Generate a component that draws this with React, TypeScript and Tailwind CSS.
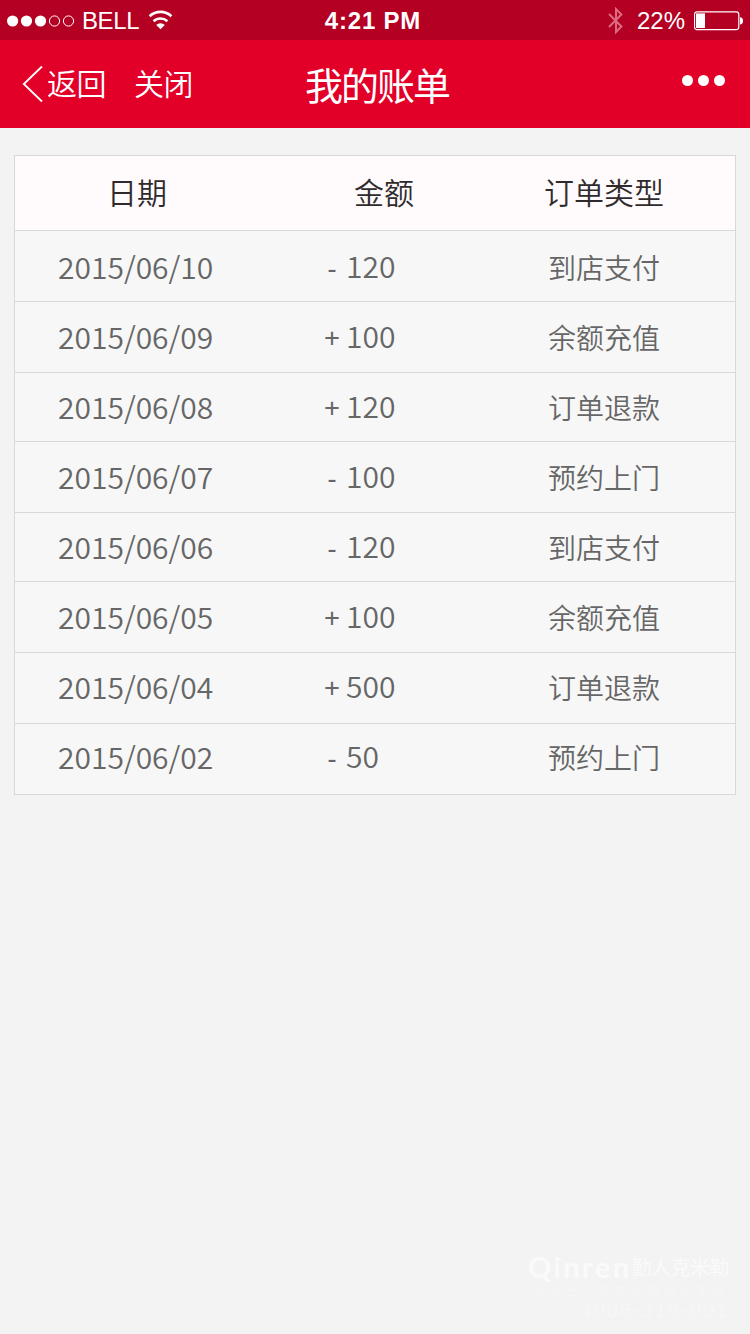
import React from "react";

type Bill = { date: string; sign: "+" | "-"; amount: string; kind: string; row: string };

const bills: Bill[] = [
  { date: "2015/06/10", sign: "-", amount: "120", kind: "到店支付", row: "h-[71px] pt-[14px]" },
  { date: "2015/06/09", sign: "+", amount: "100", kind: "余额充值", row: "h-[71px] pt-[13px]" },
  { date: "2015/06/08", sign: "+", amount: "120", kind: "订单退款", row: "h-[69px] pt-3" },
  { date: "2015/06/07", sign: "-", amount: "100", kind: "预约上门", row: "h-[71px] pt-[13px]" },
  { date: "2015/06/06", sign: "-", amount: "120", kind: "到店支付", row: "h-[69px] pt-3" },
  { date: "2015/06/05", sign: "+", amount: "100", kind: "余额充值", row: "h-[71px] pt-[13px]" },
  { date: "2015/06/04", sign: "+", amount: "500", kind: "订单退款", row: "h-[71px] pt-3" },
  { date: "2015/06/02", sign: "-", amount: "50", kind: "预约上门", row: "h-[71px] pt-[11px]" },
];

function StatusBar() {
  return (
    <div className="flex h-10 items-center bg-[#b40022] font-['Liberation_Sans',sans-serif] text-white">
      <div className="flex w-[250px] items-center pl-[7px]">
        <svg width="68" height="12" viewBox="0 0 68 12" fill="white" className="mt-px">
          <circle cx="5.6" cy="6" r="5.6" />
          <circle cx="19.5" cy="6" r="5.6" />
          <circle cx="33.5" cy="6" r="5.6" />
          <circle cx="47.5" cy="6" r="5.1" fill="none" stroke="white" />
          <circle cx="61.5" cy="6" r="5.1" fill="none" stroke="white" />
        </svg>
        <span className="ml-[7px] mt-0.5 w-[58px] text-2xl leading-6 tracking-[-0.4px]">BELL</span>
        <svg width="26" height="20" viewBox="0 0 26 20" className="ml-2" fill="none" stroke="white" strokeWidth="2.6">
          <path d="M1.6 6.2 A16 16 0 0 1 23.4 6.2" />
          <path d="M5.6 11.2 A10 10 0 0 1 19.4 11.2" />
          <path d="M8.2 15 A6 6 0 0 1 16.8 15 L12.5 19.3 Z" fill="white" stroke="none" />
        </svg>
      </div>
      <div className="mt-0.5 flex w-[250px] justify-center text-2xl font-bold leading-6 tracking-[0.8px]">
        <span className="-ml-1">4:21 PM</span>
      </div>
      <div className="flex w-[250px] items-center justify-end pr-[6px]">
        <svg width="18" height="28" viewBox="0 0 18 28" fill="none" stroke="#dc6b80" strokeWidth="2" className="mt-px">
          <path d="M1 7 L13.4 19.5 L8 25 V2 L13.4 7.5 L1 20" />
        </svg>
        <span className="ml-[11px] mt-0.5 w-[51px] text-2xl leading-6">22%</span>
        <svg width="50" height="20" viewBox="0 0 50 20" className="ml-[6px] mt-px">
          <rect x="0.5" y="0.8" width="44.3" height="17.8" rx="2.5" fill="none" stroke="white" strokeWidth="1.2" />
          <rect x="2" y="2.4" width="9" height="14.6" fill="white" />
          <path d="M46 6.2 a3 3.6 0 0 1 0 7.2Z" fill="white" />
        </svg>
      </div>
    </div>
  );
}

function NavBar() {
  return (
    <div className="flex h-[88px] items-center bg-[#e20029] text-white">
      <div className="flex w-[250px] items-center pl-[22px] font-[350]">
        <svg width="22" height="38" viewBox="0 0 22 38" fill="none" stroke="white" strokeWidth="1.8">
          <path d="M20 1.5 L1.8 19 L20 36.5" />
        </svg>
        <span className="-mt-1 ml-[3px] w-[60px] text-[30px] leading-[44px] tracking-[-0.5px]">返回</span>
        <span className="-mt-1 ml-[27px] text-[30px] leading-[44px] tracking-[-0.5px]">关闭</span>
      </div>
      <h1 className="-mt-px flex w-[254px] justify-center text-[38px] font-normal leading-[50px] tracking-[-2px]">
        我的账单
      </h1>
      <div className="flex flex-1 justify-end pr-6">
        <svg width="44" height="12" viewBox="0 0 44 12" fill="white" className="-mt-[7px]">
          <circle cx="5.5" cy="5.5" r="5.5" />
          <circle cx="21.5" cy="5.5" r="5.5" />
          <circle cx="37.5" cy="5.5" r="5.5" />
        </svg>
      </div>
    </div>
  );
}

function BillTable() {
  return (
    <div className="mx-[14px] mt-[27px] border border-b-0 border-[#d8d8d8] bg-[#f7f7f7] font-[350]">
      <div className="flex h-[75px] border-b border-[#d8d8d8] bg-[#fffafb] pt-[13px] text-[30px] leading-[44px] text-[#2f2b2c]">
        <span className="w-[339px] pl-[92px]">日期</span>
        <span className="w-[190px]">金额</span>
        <span>订单类型</span>
      </div>
      {bills.map((b) => (
        <div key={b.date} className={`flex border-b border-[#d8d8d8] leading-[40px] text-[#666] ${b.row}`}>
          <span className="w-[303px] pl-[43px] pt-px text-[30px]">{b.date}</span>
          <span className="flex w-[230px] text-[30px]">
            <span className="flex w-7 justify-center pt-0.5 font-['Noto_Sans',sans-serif] text-[28px] font-normal">
              {b.sign}
            </span>
            <span>{b.amount}</span>
          </span>
          <span className="pt-0.5 text-[28px]">{b.kind}</span>
        </div>
      ))}
    </div>
  );
}

function Watermark() {
  return (
    <div className="mr-[21px] flex flex-col items-end text-[#fafafa]">
      <div className="flex h-[28px] items-center">
        <span className="font-['Lato',sans-serif] text-[29px] font-bold leading-7 tracking-[2.4px]">Qinren</span>
        <span className="text-[20px] leading-5 tracking-[-0.5px]">勤人克米勒</span>
      </div>
      <span className="mt-[3px] text-[12px] leading-[14px] tracking-[4.4px] text-[#f6f6f6]">专业上门洗车家政服务平台</span>
      <span className="font-['Liberation_Sans',sans-serif] text-[21px] leading-6 tracking-[1.5px] text-[#f6f6f6]">
        4006-318-001
      </span>
    </div>
  );
}

export default function App() {
  return (
    <div className="flex h-[1334px] w-[750px] flex-col overflow-hidden whitespace-nowrap bg-[#f3f3f3] font-['Noto_Sans_CJK_SC',sans-serif]">
      <StatusBar />
      <NavBar />
      <BillTable />
      <div className="mt-auto pb-3">
        <Watermark />
      </div>
    </div>
  );
}
